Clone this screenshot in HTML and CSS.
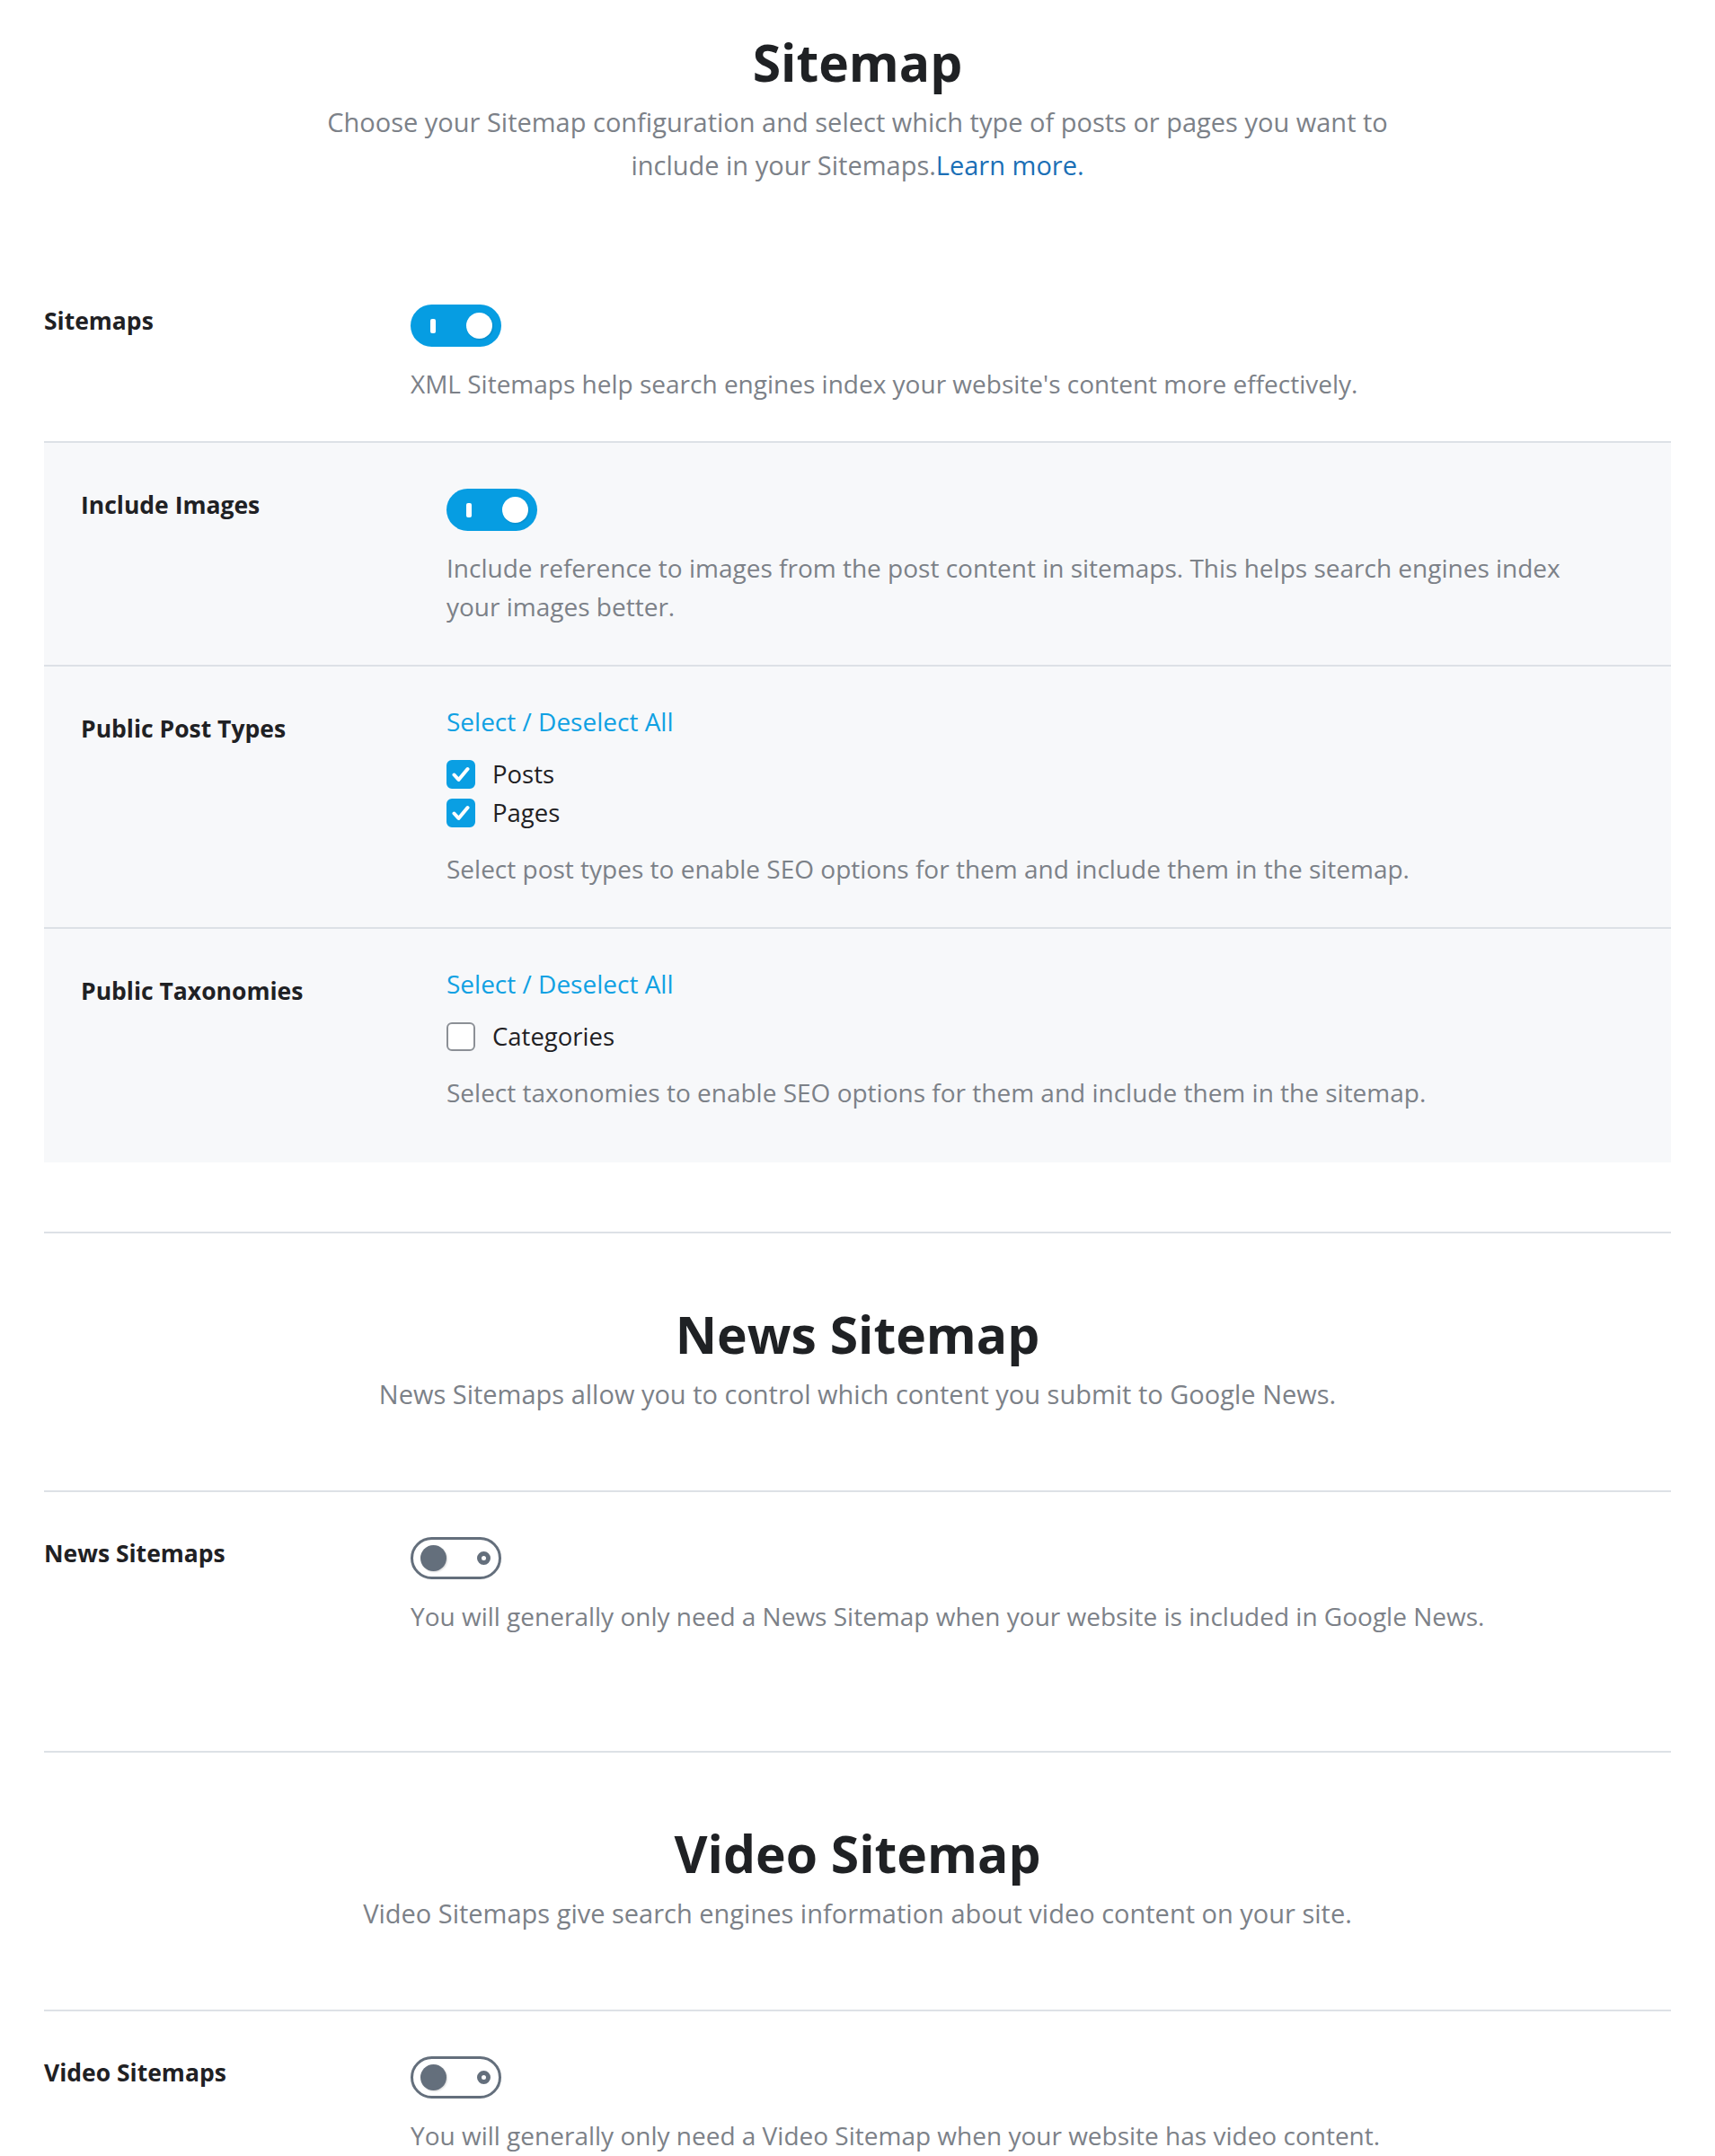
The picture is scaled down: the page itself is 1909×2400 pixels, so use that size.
FILE: index.html
```html
<!DOCTYPE html>
<html lang="en">
<head>
<meta charset="utf-8">
<title>Sitemap Settings</title>
<link rel="stylesheet" href="styles.css">
</head>
<body>
<main class="page">
  <header class="sec-head sec-head--first">
    <h1 class="sec-title">Sitemap</h1>
    <p class="sec-desc"><span>Choose your Sitemap configuration and select which type of posts or pages you want to</span> <span>include in your Sitemaps.</span><a class="learn" href="#">Learn more.</a></p>
  </header>

  <div class="field field--bordered">
    <div class="field-label">Sitemaps</div>
    <div class="field-body">
      <span class="toggle toggle--on"><span class="toggle-bar"></span><span class="toggle-knob"></span></span>
      <p class="field-desc">XML Sitemaps help search engines index your website's content more effectively.</p>
    </div>
  </div>

  <div class="group">
    <div class="field field--group field--bordered">
      <div class="field-label">Include Images</div>
      <div class="field-body">
        <span class="toggle toggle--on"><span class="toggle-bar"></span><span class="toggle-knob"></span></span>
        <p class="field-desc">Include reference to images from the post content in sitemaps. This helps search engines index your images better.</p>
      </div>
    </div>

    <div class="field field--group field--bordered">
      <div class="field-label">Public Post Types</div>
      <div class="field-body">
        <a class="select-all" href="#">Select / Deselect All</a>
        <ul class="checks">
          <li class="check"><span class="box box--on"><svg viewBox="0 0 32 32" width="32" height="32"><path d="M8.5 16.5 L13.5 22 L23.5 10" fill="none" stroke="#fff" stroke-width="4" stroke-linecap="round" stroke-linejoin="round"/></svg></span>Posts</li>
          <li class="check"><span class="box box--on"><svg viewBox="0 0 32 32" width="32" height="32"><path d="M8.5 16.5 L13.5 22 L23.5 10" fill="none" stroke="#fff" stroke-width="4" stroke-linecap="round" stroke-linejoin="round"/></svg></span>Pages</li>
        </ul>
        <p class="field-desc">Select post types to enable SEO options for them and include them in the sitemap.</p>
      </div>
    </div>

    <div class="field field--group field--last">
      <div class="field-label">Public Taxonomies</div>
      <div class="field-body">
        <a class="select-all" href="#">Select / Deselect All</a>
        <ul class="checks">
          <li class="check"><span class="box"></span>Categories</li>
        </ul>
        <p class="field-desc">Select taxonomies to enable SEO options for them and include them in the sitemap.</p>
      </div>
    </div>
  </div>

  <hr class="sep sep--after-group">

  <header class="sec-head">
    <h2 class="sec-title">News Sitemap</h2>
    <p class="sec-desc">News Sitemaps allow you to control which content you submit to Google News.</p>
  </header>

  <hr class="sep sep--after-head">

  <div class="field">
    <div class="field-label">News Sitemaps</div>
    <div class="field-body">
      <span class="toggle toggle--off"><span class="toggle-knob"></span><span class="toggle-ring"></span></span>
      <p class="field-desc">You will generally only need a News Sitemap when your website is included in Google News.</p>
    </div>
  </div>

  <hr class="sep sep--after-field">

  <header class="sec-head">
    <h2 class="sec-title">Video Sitemap</h2>
    <p class="sec-desc">Video Sitemaps give search engines information about video content on your site.</p>
  </header>

  <hr class="sep sep--after-head">

  <div class="field">
    <div class="field-label">Video Sitemaps</div>
    <div class="field-body">
      <span class="toggle toggle--off"><span class="toggle-knob"></span><span class="toggle-ring"></span></span>
      <p class="field-desc">You will generally only need a Video Sitemap when your website has video content.</p>
    </div>
  </div>
</main>
</body>
</html>
```
FILE: styles.css
```css
html, body {
  margin: 0;
  padding: 0;
  background: #ffffff;
}

body {
  font-family: "Open Sans", "Noto Sans", "Liberation Sans", sans-serif;
  color: #1f2124;
}

.page {
  padding: 34px 49px 0 49px;
}

/* Section headers */
.sec-head {
  text-align: center;
  display: flex;
  flex-direction: column;
  align-items: center;
  padding-top: 77px;
}

.sec-head--first {
  padding-top: 0;
  margin-bottom: 81px;
}

.sec-title {
  margin: 0;
  font-size: 57px;
  line-height: 70px;
  font-weight: 700;
  color: #1f2124;
}

.sec-desc {
  margin: 8px 0 0;
  max-width: 1225px;
  font-size: 29px;
  line-height: 48px;
  font-weight: 400;
  color: #7c8188;
}

.learn {
  color: #1b6fb6;
  text-decoration: none;
}

/* Separators */
.sep {
  border: 0;
  height: 2px;
  background: #dde1e6;
  margin: 0;
}

.sep--after-group { margin-top: 77px; }
.sep--after-head { margin-top: 83px; }
.sep--after-field { margin-top: 86px; }

/* Fields */
.field {
  display: grid;
  grid-template-columns: 408px 1fr;
  padding: 50px 0 42px;
}

.field--bordered {
  border-bottom: 2px solid #dde1e6;
}

.group {
  background: #f7f8fa;
}

.field--group {
  grid-template-columns: 407px 1fr;
  padding: 51px 41px 43px;
}

.field--last {
  padding-bottom: 56px;
}

.field-label {
  font-size: 26.5px;
  line-height: 36px;
  font-weight: 700;
  color: #1f2124;
}

.field-body {
  display: flex;
  flex-direction: column;
  align-items: flex-start;
}

.field-desc {
  margin: 20px 0 0;
  font-size: 28px;
  line-height: 43px;
  color: #7c8188;
  max-width: 1275px;
}

/* Toggles */
.toggle {
  position: relative;
  display: block;
  width: 101px;
  height: 47px;
  border-radius: 24px;
  box-sizing: border-box;
}

.toggle--on {
  background: #069de2;
}

.toggle-bar {
  position: absolute;
  left: 22px;
  top: 16px;
  width: 6px;
  height: 16px;
  border-radius: 2px;
  background: #ffffff;
}

.toggle--on .toggle-knob {
  position: absolute;
  right: 10px;
  top: 9px;
  width: 29px;
  height: 29px;
  border-radius: 50%;
  background: #ffffff;
  box-shadow: 1px 1px 2px rgba(0, 0, 0, 0.12);
}

.toggle--off {
  background: #ffffff;
  border: 3px solid #646f7c;
}

.toggle--off .toggle-knob {
  position: absolute;
  left: 8px;
  top: 6px;
  width: 29px;
  height: 29px;
  border-radius: 50%;
  background: #646f7c;
  box-shadow: 1px 1px 2px rgba(0, 0, 0, 0.15);
}

.toggle-ring {
  position: absolute;
  left: 71px;
  top: 13px;
  width: 15px;
  height: 15px;
  border-radius: 50%;
  box-sizing: border-box;
  border: 5px solid #646f7c;
}

/* Select all link */
.select-all {
  margin-top: -2px;
  font-size: 28px;
  line-height: 24px;
  color: #10a1e3;
  text-decoration: none;
}

/* Checkboxes */
.checks {
  list-style: none;
  margin: 25px 0 0;
  padding: 0;
}

.check {
  display: flex;
  align-items: center;
  gap: 19px;
  font-size: 27.5px;
  line-height: 43px;
  color: #1f2124;
}

.box {
  display: block;
  width: 32px;
  height: 32px;
  border-radius: 6px;
  box-sizing: border-box;
  border: 2px solid #8c9096;
  background: #ffffff;
}

.box svg {
  display: block;
  margin: -2px;
}

.box--on {
  border-color: #0a9fe3;
  background: #0a9fe3;
}
```
